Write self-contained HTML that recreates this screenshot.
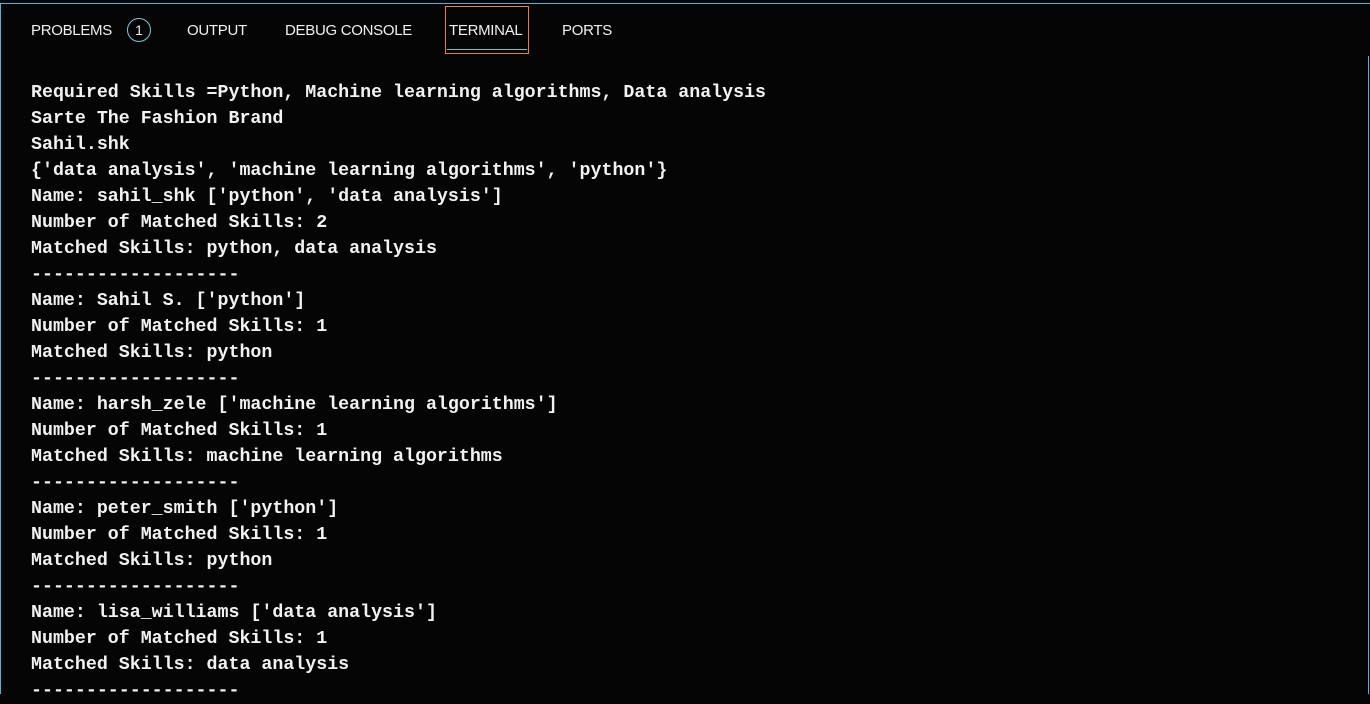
<!DOCTYPE html>
<html><head><meta charset="utf-8"><style>
html,body{margin:0;padding:0;background:#050505;}
body{width:1370px;height:694px;overflow:hidden;position:relative;}
.topb{position:absolute;left:0;top:3px;width:1370px;height:1px;background:#4fb3d9;}
.leftb{position:absolute;left:0;top:3px;width:1px;height:691px;background:#4fb3d9;}
.rightb{position:absolute;left:1368px;top:56px;width:1px;height:638px;background:#4fb3d9;}
.tab{position:absolute;top:22px;font-family:"Liberation Sans",sans-serif;font-size:15px;color:#f0f0f0;letter-spacing:-0.3px;}
.badge{position:absolute;left:127px;top:18px;width:24px;height:24px;border:1px solid #7fc6dc;border-radius:50%;box-sizing:border-box;color:#f0f0f0;font-family:"Liberation Sans",sans-serif;font-size:14px;text-align:center;line-height:22px;}
.focus{position:absolute;left:445px;top:6px;width:84px;height:48px;border:1px solid #e8832a;box-sizing:border-box;}
.ul{position:absolute;left:447px;top:49px;width:80px;height:1px;background:#6fc0dc;}
pre{position:absolute;left:31px;top:80px;margin:0;font-family:"Liberation Mono",monospace;font-size:18.3px;line-height:26px;color:#f2f2f2;font-weight:bold;}
</style></head><body>
<div class="topb"></div><div class="leftb"></div><div class="rightb"></div>
<div class="tab" style="left:31px">PROBLEMS</div>
<div class="badge">1</div>
<div class="tab" style="left:187px">OUTPUT</div>
<div class="tab" style="left:285px">DEBUG CONSOLE</div>
<div class="focus"></div>
<div class="tab" style="left:449px">TERMINAL</div>
<div class="ul"></div>
<div class="tab" style="left:562px">PORTS</div>
<pre>Required Skills =Python, Machine learning algorithms, Data analysis
Sarte The Fashion Brand
Sahil.shk
{'data analysis', 'machine learning algorithms', 'python'}
Name: sahil_shk ['python', 'data analysis']
Number of Matched Skills: 2
Matched Skills: python, data analysis
-------------------
Name: Sahil S. ['python']
Number of Matched Skills: 1
Matched Skills: python
-------------------
Name: harsh_zele ['machine learning algorithms']
Number of Matched Skills: 1
Matched Skills: machine learning algorithms
-------------------
Name: peter_smith ['python']
Number of Matched Skills: 1
Matched Skills: python
-------------------
Name: lisa_williams ['data analysis']
Number of Matched Skills: 1
Matched Skills: data analysis
-------------------</pre>
</body></html>
